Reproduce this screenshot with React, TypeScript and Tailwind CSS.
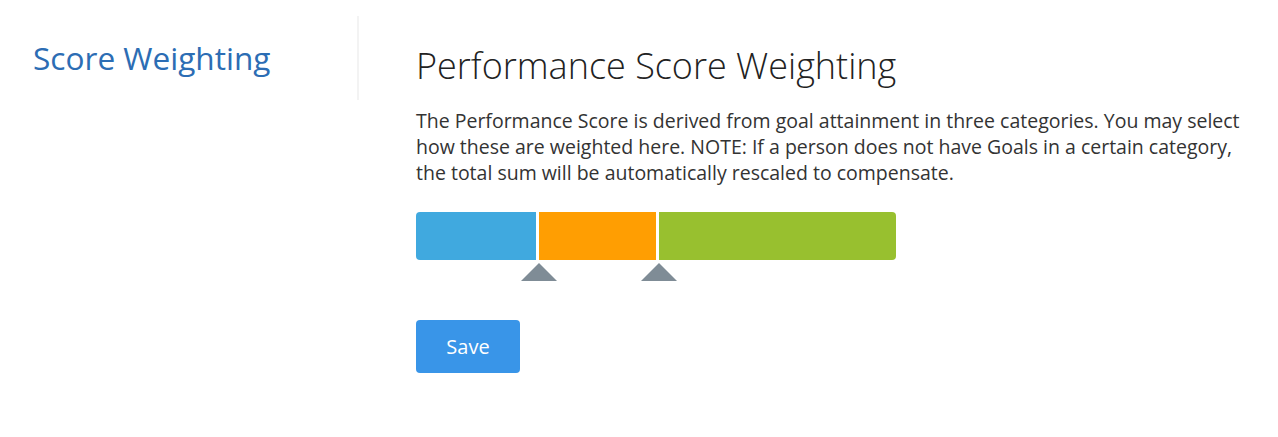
import { useState } from "react";

type Segment = { key: string; color: string; width: number };

const SEGMENTS: Segment[] = [
  { key: "personal", color: "bg-[#40a9df]", width: 120 },
  { key: "team", color: "bg-[#ff9e02]", width: 117 },
  { key: "company", color: "bg-[#98c02f]", width: 237 },
];

function Handle() {
  return (
    <div className="w-0 h-0 border-l-[18px] border-r-[18px] border-b-[18px] border-l-transparent border-r-transparent border-b-[#7f8c96]" />
  );
}

export default function App() {
  const [segments] = useState(SEGMENTS);

  return (
    <div className="flex min-h-[437px] bg-white font-['Open_Sans',sans-serif]">
      {/* Sidebar */}
      <div className="w-[359px] shrink-0">
        <div className="mt-4 h-[84px] border-r-2 border-[#f3f3f3] pl-[33px] pt-[25px]">
          <h2 className="text-[31.6px] leading-[1.1] text-[#2c6db4]">
            Score Weighting
          </h2>
        </div>
      </div>

      {/* Content */}
      <div className="flex-1 pl-[57px] pr-6 pt-[46px]">
        <h1 className="text-[36px] leading-[1.1] font-light text-[#222]">
          Performance Score Weighting
        </h1>
        <p className="mt-[22px] max-w-[840px] text-[19.5px] leading-[26px] text-[#333]">
          The Performance Score is derived from goal attainment in three
          categories. You may select how these are weighted here. NOTE: If a
          person does not have Goals in a certain category, the total sum will
          be automatically rescaled to compensate.
        </p>

        {/* Weighting bar */}
        <div className="mt-[26px] w-[480px]">
          <div className="flex h-12 gap-[3px] rounded overflow-hidden">
            {segments.map((s) => (
              <div
                key={s.key}
                className={s.color}
                style={{ width: s.width }}
              />
            ))}
          </div>
          <div className="flex mt-[3px]">
            <div className="ml-[105px]">
              <Handle />
            </div>
            <div className="ml-[84px]">
              <Handle />
            </div>
          </div>
        </div>

        <button className="mt-[39px] w-[104px] h-[53px] rounded bg-[#3995e8] pt-px text-white text-[20px]">
          Save
        </button>
      </div>
    </div>
  );
}
